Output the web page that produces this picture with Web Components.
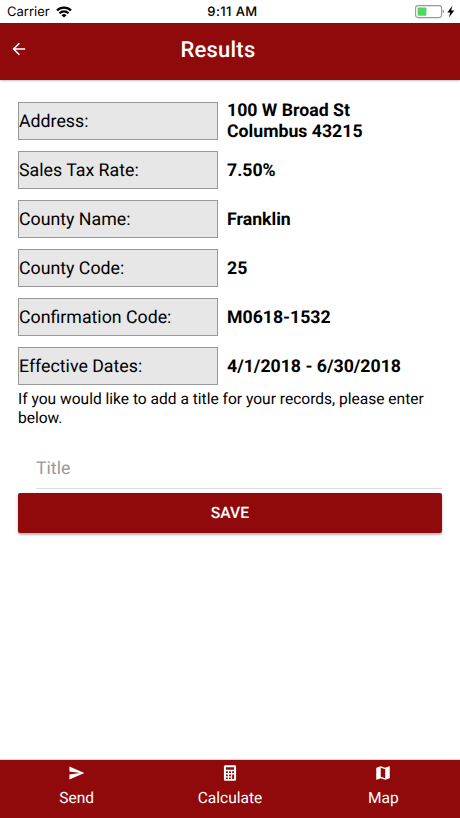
<!DOCTYPE html>
<html lang="en">
<head>
<meta charset="utf-8">
<title>Results</title>
<style>
  body {
    margin: 0;
    background: #fff;
    color: #000;
    font-family: Roboto, sans-serif;
    text-rendering: geometricPrecision;
  }
</style>
</head>
<body>
<results-page>
  <status-bar carrier="Carrier" time="9:11 AM"></status-bar>
  <nav-header>Results</nav-header>
  <result-row label="Address:">100 W Broad St<br>Columbus 43215</result-row>
  <result-row label="Sales Tax Rate:">7.50%</result-row>
  <result-row label="County Name:">Franklin</result-row>
  <result-row label="County Code:">25</result-row>
  <result-row label="Confirmation Code:">M0618-1532</result-row>
  <result-row label="Effective Dates:">4/1/2018 - 6/30/2018</result-row>
  <save-form>If you would like to add a title for your records, please enter below.</save-form>
  <tab-bar>
    <tab-item icon="send">Send</tab-item>
    <tab-item icon="calculate">Calculate</tab-item>
    <tab-item icon="map">Map</tab-item>
  </tab-bar>
</results-page>

<script>
class ResultsPage extends HTMLElement {
  constructor() {
    super();
    this.attachShadow({ mode: "open" });
    this.shadowRoot.innerHTML = `
      <style>
        :host {
          display: flex;
          flex-direction: column;
          height: 818px;
          overflow: hidden;
        }
        main {
          flex: 1;
          padding: 22px 18px 0;
        }
      </style>
      <slot name="status"></slot>
      <slot name="header"></slot>
      <main><slot></slot></main>
      <slot name="tabs"></slot>
    `;
  }

  connectedCallback() {
    this.querySelector("status-bar").slot = "status";
    this.querySelector("nav-header").slot = "header";
    this.querySelector("tab-bar").slot = "tabs";
  }
}

class StatusBar extends HTMLElement {
  constructor() {
    super();
    this.attachShadow({ mode: "open" });
  }

  connectedCallback() {
    this.shadowRoot.innerHTML = `
      <style>
        :host {
          display: grid;
          grid-template-columns: 1fr auto 1fr;
          align-items: center;
          box-sizing: border-box;
          height: 23px;
          padding: 1px 5px 0 7px;
          font: 13px/22px Inter, sans-serif;
        }
        div { display: flex; align-items: center; }
        .wifi { margin-left: 6px; }
        .time { padding-left: 3px; font-weight: 500; font-size: 13px; letter-spacing: 0.4px; }
        .power { justify-content: flex-end; }
        svg { display: block; }
      </style>
      <div>
        <span class="carrier">${this.getAttribute("carrier")}</span>
        <svg class="wifi" width="16" height="12" viewBox="0 0 16 12">
          <path fill="none" stroke="#000" stroke-width="2.2" d="M1 4.500a10 10 0 0 1 14 0M3.500 7.200a6.400 6.400 0 0 1 9 0"/>
          <path d="M8 11.600 5.500 9.300a3.500 3.500 0 0 1 5 0z"/>
        </svg>
      </div>
      <div class="time">${this.getAttribute("time")}</div>
      <div class="power">
        <svg width="40" height="14" viewBox="0 0 40 14">
          <rect x=".6" y=".6" width="26" height="12" rx="2.5" fill="#fff" stroke="#999" stroke-width="1.1"/>
          <rect x="2.6" y="2.5" width="8.8" height="8.200" rx=".8" fill="#4cd964"/>
          <path d="M27.700 4.500v4q1.300-.6 1.300-2t-1.300-2z" fill="#999"/>
          <path d="m37.300.8-4.900 6.600h2.900l-1.500 5.200 5.500-7h-3.100z"/>
        </svg>
      </div>
    `;
  }
}

class NavHeader extends HTMLElement {
  constructor() {
    super();
    this.attachShadow({ mode: "open" });
    this.shadowRoot.innerHTML = `
      <style>
        :host {
          display: grid;
          grid-template-columns: 1fr auto 1fr;
          align-items: center;
          box-sizing: border-box;
          height: 57px;
          padding: 0 36px 3px 12px;
          background: #900a0c;
          box-shadow: 0 1px 2px rgba(0, 0, 0, 0.25);
          color: #fff;
        }
        svg { display: block; margin-top: -3px; }
        h1 { margin: 0; font-size: 22px; font-weight: 500; letter-spacing: 0.2px; }
      </style>
      <svg width="14" height="14" viewBox="0 0 14 14" fill="none" stroke="#fff" stroke-width="1.6">
        <path d="M13.200 7H1.800M7.400 1.200 1.600 7l5.800 5.800"/>
      </svg>
      <h1><slot></slot></h1>
    `;
  }
}

class ResultRow extends HTMLElement {
  constructor() {
    super();
    this.attachShadow({ mode: "open" });
  }

  connectedCallback() {
    this.shadowRoot.innerHTML = `
      <style>
        :host {
          display: grid;
          grid-template: 38px / 200px 1fr;
          gap: 9px;
          align-items: center;
          height: 38px;
          margin-bottom: 11px;
          font-size: 17.75px;
          line-height: 21px;
        }
        :host(:last-of-type) { margin-bottom: 0; }
        .label {
          box-sizing: border-box;
          height: 38px;
          border: 1px solid #999;
          background: #e7e7e7;
          line-height: 38px;
        }
        .value { padding-top: 2px; font-size: 17.7px; font-weight: 700; }
      </style>
      <div class="label">${this.getAttribute("label")}</div>
      <div class="value"><slot></slot></div>
    `;
  }
}

class SaveForm extends HTMLElement {
  constructor() {
    super();
    this.attachShadow({ mode: "open" });
    this.shadowRoot.innerHTML = `
      <style>
        :host { display: block; }
        p { margin: 0; padding-top: 5px; font-size: 15.55px; line-height: 19px; }
        input {
          display: block;
          box-sizing: border-box;
          width: 406px;
          height: 41px;
          margin: 20px 0 4px 18px;
          padding: 1px 0 0;
          border: 0;
          border-bottom: 1px solid #dedede;
          background: none;
          font: 17.7px Roboto, sans-serif;
          text-rendering: inherit;
          outline: 0;
        }
        input::placeholder { color: #999; }
        button {
          display: block;
          width: 424px;
          height: 40px;
          padding: 0 0 1px;
          border: 0;
          border-radius: 2px;
          background: #900a0c;
          box-shadow: 0 2px 2px rgba(0, 0, 0, 0.2), 0 1px 4px rgba(0, 0, 0, 0.14);
          color: #fff;
          font: 500 15.7px Roboto, sans-serif;
          text-rendering: inherit;
        }
      </style>
      <p><slot></slot></p>
      <input type="text" placeholder="Title">
      <button>SAVE</button>
    `;
  }
}

class TabBar extends HTMLElement {
  constructor() {
    super();
    this.attachShadow({ mode: "open" });
    this.shadowRoot.innerHTML = `
      <style>
        :host {
          display: grid;
          grid-template-columns: repeat(3, 1fr);
          height: 58px;
          background: #900a0c;
          box-shadow: 0 -1px 1px rgba(0, 0, 0, 0.15);
          color: #fff;
        }
      </style>
      <slot></slot>
    `;
  }
}

const icons = {
  send: '<path d="M2 21l21-9L2 3v7l15 2-15 2z" transform="translate(0 .6) scale(.95)"/>',
  calculate: '<path fill-rule="evenodd" d="M5 1h14q2 0 2 2v18q0 2-2 2H5q-2 0-2-2V3q0-2 2-2zm1 3v3.500h12V4zm0 5.500v2.500h2.800V9.500zm4.600 0v2.500h2.800V9.500zm4.600 0v2.500H18V9.500zM6 14v2.400h2.800V14zm4.600 0v2.400h2.800V14zm4.600 0v6.500H18V14zM6 18.200v2.300h2.800v-2.300zm4.600 0v2.300h2.800v-2.300z" transform="translate(1.200 .6) scale(.9 .95)"/>',
  map: '<path d="M20.500 3l-.16.030L15 5.100 9 3 3.360 4.900c-.21.070-.36.250-.36.480V20.500c0 .28.220.5.500.5l.16-.03L9 18.900l6 2.100 5.640-1.900c.21-.07.360-.25.360-.48V3.500c0-.28-.22-.5-.5-.5zM15 19l-6-2.110V5l6 2.110V19z"/>'
};

class TabItem extends HTMLElement {
  constructor() {
    super();
    this.attachShadow({ mode: "open" });
  }

  connectedCallback() {
    this.shadowRoot.innerHTML = `
      <style>
        :host {
          display: flex;
          flex-direction: column;
          align-items: center;
          padding-top: 4px;
          font-size: 15.5px;
          line-height: 20px;
        }
        svg { display: block; fill: currentColor; margin-bottom: 6px; }
      </style>
      <svg width="18" height="18" viewBox="0 0 24 24">${icons[this.getAttribute("icon")]}</svg>
      <slot></slot>
    `;
  }
}

customElements.define("results-page", ResultsPage);
customElements.define("status-bar", StatusBar);
customElements.define("nav-header", NavHeader);
customElements.define("result-row", ResultRow);
customElements.define("save-form", SaveForm);
customElements.define("tab-bar", TabBar);
customElements.define("tab-item", TabItem);
</script>
</body>
</html>
